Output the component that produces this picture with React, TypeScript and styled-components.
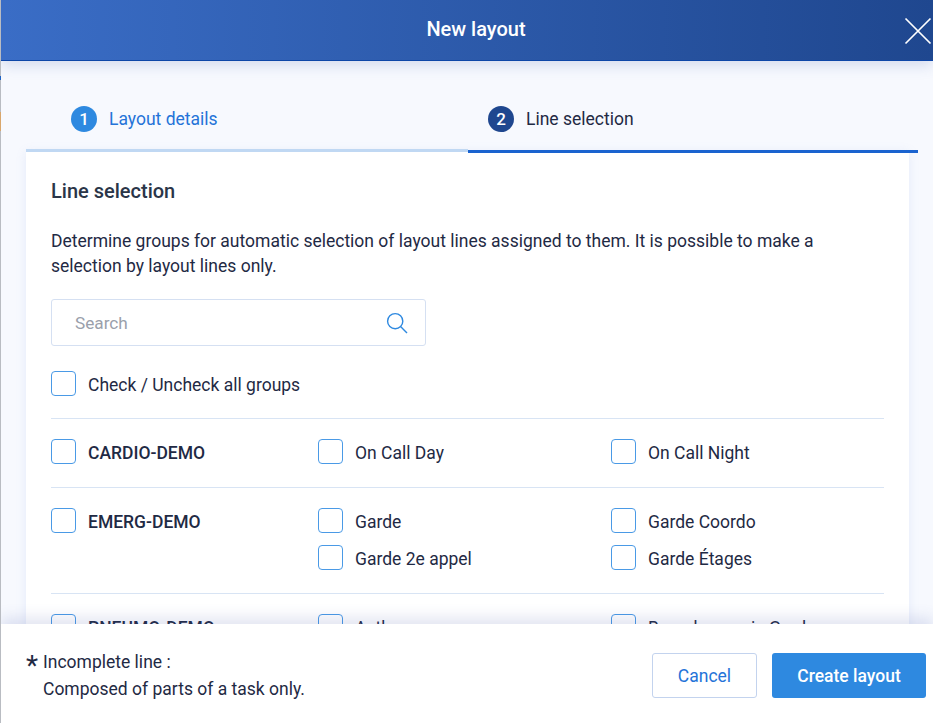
import React, { FunctionComponent } from 'react'
import styled, { createGlobalStyle } from 'styled-components'

const GlobalStyle = createGlobalStyle`
  html, body {
    margin: 0;
    padding: 0;
    height: 100%;
    overflow: hidden;
    background: linear-gradient(
      180deg,
      #b9bcc2 0 76px,
      #1f63c4 76px 80px,
      #b9bcc2 80px 112px,
      #d9a76c 112px 131px,
      #b9bcc2 131px
    );
  }
  * {
    box-sizing: border-box;
  }
`

interface GroupData {
  name: string
  lines: string[]
}

const groups: GroupData[] = [
  { name: 'CARDIO-DEMO', lines: ['On Call Day', 'On Call Night'] },
  { name: 'EMERG-DEMO', lines: ['Garde', 'Garde Coordo', 'Garde 2e appel', 'Garde Étages'] },
  { name: 'PNEUMO-DEMO', lines: ['Asthme', 'Bronchoscopie Garde'] },
]

const Check: FunctionComponent<{ label: string; bold?: boolean }> = ({ label, bold }) => (
  <CheckRow>
    <CheckBox />
    <CheckLabel $bold={bold}>{label}</CheckLabel>
  </CheckRow>
)

const App: FunctionComponent = () => {
  return (
    <Modal>
      <GlobalStyle />
      <Header>
        <HeaderTitle>New layout</HeaderTitle>
        <CloseButton>
          <svg width="28" height="28" viewBox="0 0 28 28" fill="none" stroke="#fff" strokeWidth="1.7">
            <path d="M1.5 1.5 L26.5 26.5 M26.5 1.5 L1.5 26.5" />
          </svg>
        </CloseButton>
      </Header>
      <Body>
        <Tabs>
          <Tab $active={false}>
            <TabNumber $active={false}>1</TabNumber>
            <TabLabel $active={false}>Layout details</TabLabel>
          </Tab>
          <Tab $active>
            <TabNumber $active>2</TabNumber>
            <TabLabel $active>Line selection</TabLabel>
          </Tab>
        </Tabs>
        <Card>
          <CardTitle>Line selection</CardTitle>
          <Description>
            Determine groups for automatic selection of layout lines assigned to them. It is possible to make a
            selection by layout lines only.
          </Description>
          <SearchBox>
            <SearchText>Search</SearchText>
            <svg width="22" height="22" viewBox="0 0 22 22" fill="none" stroke="#2e89e0" strokeWidth="1.4">
              <circle cx="9.2" cy="9.2" r="7.6" />
              <path d="M14.8 14.8 L21 21" />
            </svg>
          </SearchBox>
          <AllRow>
            <Check label="Check / Uncheck all groups" />
          </AllRow>
          {groups.map((group) => (
            <GroupRow key={group.name}>
              <Check label={group.name} bold />
              <LineGrid>
                {group.lines.map((line) => (
                  <Check key={line} label={line} />
                ))}
              </LineGrid>
            </GroupRow>
          ))}
        </Card>
      </Body>
      <Footer>
        <Note>
          <NoteLine>
            <Star>*</Star>
            Incomplete line :
          </NoteLine>
          <NoteLine>Composed of parts of a task only.</NoteLine>
        </Note>
        <Buttons>
          <CancelButton>Cancel</CancelButton>
          <CreateButton>Create layout</CreateButton>
        </Buttons>
      </Footer>
    </Modal>
  )
}

const Modal = styled.div`
  display: flex;
  flex-direction: column;
  width: 932px;
  height: 723px;
  margin-left: 1px;
  overflow: hidden;
  background: #f7f9fe;
  font-family: Roboto, "Liberation Sans", sans-serif;
  color: #1f2a44;
`

const Header = styled.header`
  position: relative;
  z-index: 2;
  flex: none;
  display: flex;
  align-items: center;
  justify-content: center;
  height: 61px;
  padding: 0 0 2px 18px;
  background: linear-gradient(90deg, #3a6dc6 0%, #1f478f 100%);
  border-bottom: 1px solid #0d46a8;
  box-shadow: 0 4px 14px rgba(60, 90, 170, 0.2);
`

const HeaderTitle = styled.h1`
  margin: 0;
  font-size: 20px;
  font-weight: 500;
  color: #fff;
`

const CloseButton = styled.div`
  position: absolute;
  top: 17px;
  right: 1px;
  display: flex;
`

const Body = styled.div`
  flex: 1;
  min-height: 0;
  display: flex;
  flex-direction: column;
  padding: 27px 14px 0 25px;
  overflow: hidden;
`

const Tabs = styled.div`
  flex: none;
  display: grid;
  grid-template-columns: 442px 450px;
`

const Tab = styled.div<{ $active: boolean }>`
  position: relative;
  display: flex;
  align-items: center;
  gap: 12px;
  height: ${(p) => (p.$active ? '65px' : '64px')};
  margin-bottom: ${(p) => (p.$active ? '-1px' : '0')};
  padding: 0 0 ${(p) => (p.$active ? '1px' : '0')} ${(p) => (p.$active ? '20px' : '45px')};
  border-bottom: 3px solid ${(p) => (p.$active ? '#1a63cf' : '#c0d8f3')};
`

const TabNumber = styled.span<{ $active: boolean }>`
  display: flex;
  align-items: center;
  justify-content: center;
  width: 26px;
  height: 26px;
  border-radius: 50%;
  background: ${(p) => (p.$active ? '#1f478f' : '#2e89e0')};
  color: #fff;
  font-size: 17px;
  font-weight: 500;
`

const TabLabel = styled.span<{ $active: boolean }>`
  font-size: 17.5px;
  color: ${(p) => (p.$active ? '#1f2a44' : '#2473d8')};
`

const Card = styled.section`
  flex: 1;
  width: 883px;
  padding: 28px 25px 0;
  background: #fff;
  box-shadow: 0 0 10px rgba(120, 150, 220, 0.14);
`

const CardTitle = styled.h2`
  margin: 0;
  font-size: 20px;
  line-height: 22px;
  font-weight: 500;
  color: #2a3548;
`

const Description = styled.p`
  margin: 27px 0 0;
  font-size: 17.5px;
  line-height: 25px;
  color: #1f2a44;
`

const SearchBox = styled.div`
  display: flex;
  align-items: center;
  justify-content: space-between;
  width: 375px;
  height: 47px;
  margin-top: 20px;
  padding: 1px 17px 0 23px;
  border: 1px solid #d5e0f2;
  border-radius: 3px;
`

const SearchText = styled.span`
  font-size: 17.2px;
  color: #9aa0ab;
`

const AllRow = styled.div`
  padding: 25px 0 22px;
`

const GroupRow = styled.div`
  display: grid;
  grid-template-columns: 267px 1fr;
  padding: 20px 0 23px;
  border-top: 1px solid #d8e4f4;
`

const LineGrid = styled.div`
  display: grid;
  grid-template-columns: 293px 1fr;
  row-gap: 12px;
`

const CheckRow = styled.label`
  display: flex;
  align-items: center;
  gap: 12px;
  height: 25px;
`

const CheckBox = styled.span`
  flex: none;
  width: 25px;
  height: 25px;
  background: #fff;
  border: 1px solid #4a9ae6;
  border-radius: 4px;
`

const CheckLabel = styled.span<{ $bold?: boolean }>`
  padding-top: 2px;
  font-size: 17.5px;
  font-weight: ${(p) => (p.$bold ? 500 : 400)};
  color: #1f2a44;
  white-space: nowrap;
`

const Footer = styled.footer`
  position: relative;
  z-index: 2;
  flex: none;
  display: flex;
  align-items: flex-start;
  justify-content: space-between;
  height: 99px;
  padding: 29px 7px 0 25px;
  background: #fff;
  box-shadow: 0 -6px 14px rgba(70, 90, 170, 0.16);
`

const Note = styled.div`
  margin-top: -4px;
  font-size: 17.5px;
  line-height: 27px;
  color: #1f2a44;
`

const NoteLine = styled.div`
  position: relative;
  padding-left: 17px;
`

const Star = styled.span`
  position: absolute;
  left: 0;
  top: 3px;
  font-size: 28px;
  line-height: 27px;
`

const Buttons = styled.div`
  display: flex;
  gap: 15px;
`

const CancelButton = styled.button`
  width: 105px;
  height: 45px;
  background: #fff;
  border: 1px solid #c3d3ee;
  border-radius: 3px;
  font-family: inherit;
  font-size: 17.5px;
  color: #2473d8;
`

const CreateButton = styled.button`
  width: 154px;
  height: 45px;
  background: #2e89e0;
  border: none;
  border-radius: 3px;
  font-family: inherit;
  font-size: 17.5px;
  font-weight: 500;
  color: #fff;
`

export default App
